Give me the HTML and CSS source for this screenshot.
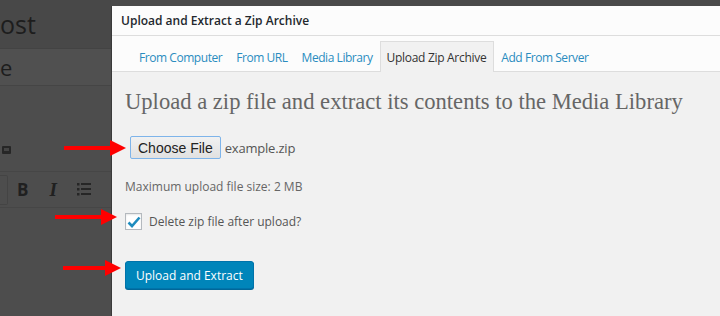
FILE: index.html
```html
<!DOCTYPE html>
<html lang="en">
<head>
  <meta charset="UTF-8" />
  <meta name="viewport" content="width=device-width, initial-scale=1.0"/>
  <title>Upload and Extract a Zip Archive</title>
  <link rel="stylesheet" href="styles.css">
</head>
<body>
  <!-- dimmed editor behind the modal -->
  <div class="behind">
    <div class="behind-title">ost</div>
    <div class="behind-input">e</div>
    <div class="behind-media">
      <svg width="10" height="10" viewBox="0 0 10 10"><rect x="0" y="1" width="9" height="8" rx="1" fill="#262626"/><rect x="2" y="3" width="5" height="3" fill="#444"/></svg>
    </div>
    <div class="behind-toolbar">
      <span class="tb-box"></span>
      <span class="tb-b">B</span>
      <span class="tb-i">I</span>
      <svg class="tb-list" width="14" height="13" viewBox="0 0 14 13">
        <g fill="#262626"><rect x="0" y="0" width="2.5" height="2.5"/><rect x="4" y="0" width="10" height="2"/><rect x="0" y="5" width="2.5" height="2.5"/><rect x="4" y="5" width="10" height="2"/><rect x="0" y="10" width="2.5" height="2.5"/><rect x="4" y="10" width="10" height="2"/></g>
      </svg>
    </div>
  </div>

  <div class="modal">
    <div class="modal-header">Upload and Extract a Zip Archive</div>
    <div class="tabs">
      <a class="tab">From Computer</a>
      <a class="tab">From URL</a>
      <a class="tab">Media Library</a>
      <a class="tab active">Upload Zip Archive</a>
      <a class="tab">Add From Server</a>
    </div>
    <div class="content">
      <h2>Upload a zip file and extract its contents to the Media Library</h2>
      <div class="file-row">
        <button class="choose">Choose File</button>
        <span class="file-name">example.zip</span>
      </div>
      <p class="max-size">Maximum upload file size: 2 MB</p>
      <label class="check-row">
        <span class="checkbox">
          <svg width="14" height="12" viewBox="0 0 14 12"><path d="M1.5 6.5 L5 10 L12.5 1.5" fill="none" stroke="#1e8cbe" stroke-width="2.6"/></svg>
        </span>
        Delete zip file after upload?
      </label>
      <button class="primary">Upload and Extract</button>
    </div>
  </div>

  <!-- annotation arrows -->
  <svg class="arrow arrow-1" width="62" height="18" viewBox="0 0 62 18"><path d="M0 7 H46 V1 L62 9 L46 17 V11 H0 Z" fill="#f00"/></svg>
  <svg class="arrow arrow-2" width="62" height="18" viewBox="0 0 62 18"><path d="M0 7 H46 V1 L62 9 L46 17 V11 H0 Z" fill="#f00"/></svg>
  <svg class="arrow arrow-3" width="58" height="18" viewBox="0 0 58 18"><path d="M0 7 H42 V1 L58 9 L42 17 V11 H0 Z" fill="#f00"/></svg>
</body>
</html>
```

FILE: styles.css
```css
body {
  margin: 0;
  height: 316px;
  overflow: hidden;
  display: flex;
  background: #4a4a4a;
  font-family: "Open Sans", "Noto Sans", sans-serif;
  position: relative;
}

/* ---- dimmed page behind ---- */
.behind {
  width: 111px;
  flex-shrink: 0;
  display: flex;
  flex-direction: column;
  background: #4d4d4d;
}
.behind-title {
  height: 48px;
  background: #484848;
  border-bottom: 1px solid #434343;
  display: flex;
  align-items: center;
  font-size: 25px;
  color: #1d1d1d;
}
.behind-input {
  height: 36px;
  border-bottom: 1px solid #454545;
  display: flex;
  align-items: center;
  font-size: 22px;
  color: #1d1d1d;
  background: #505050;
}
.behind-media {
  height: 12px;
  margin-top: 58px;
  padding-left: 2px;
  display: flex;
  align-items: center;
}
.behind-toolbar {
  margin-top: 15px;
  height: 35px;
  border-top: 1px solid #464646;
  border-bottom: 1px solid #464646;
  display: flex;
  align-items: center;
  color: #222;
}
.tb-box {
  width: 7px;
  height: 28px;
  border: 1px solid #444;
  border-left: none;
  border-radius: 0 2px 2px 0;
}
.tb-b {
  font-family: "Open Sans", sans-serif;
  font-weight: 700;
  font-size: 17px;
  margin-left: 9px;
  color: #202020;
}
.tb-i {
  font-family: "Liberation Serif", serif;
  font-style: italic;
  font-weight: 700;
  font-size: 19px;
  margin-left: 21px;
  color: #202020;
}
.tb-list {
  margin-left: 20px;
}

/* ---- modal ---- */
.modal {
  flex: 1;
  margin-top: 6px;
  background: #f1f1f1;
  border-left: 1px solid #3a3a3a;
  display: flex;
  flex-direction: column;
  min-width: 0;
}
.modal-header {
  height: 29px;
  background: #fcfcfc;
  border-bottom: 1px solid #dddddd;
  padding-left: 9px;
  font-size: 12px;
  font-weight: 600;
  color: #23282d;
  display: flex;
  align-items: center;
}
.tabs {
  height: 35px;
  background: #fcfcfc;
  border-bottom: 1px solid #dddddd;
  display: flex;
  align-items: flex-end;
  padding-left: 20px;
}
.tab {
  height: 29px;
  padding: 0 6px;
  display: flex;
  align-items: center;
  font-size: 12px;
  letter-spacing: -0.45px;
  color: #2a8cbf;
  border: 1px solid transparent;
  border-bottom: none;
  margin-bottom: -1px;
  white-space: nowrap;
}
.tab.active {
  background: #f1f1f1;
  border-color: #dddddd;
  color: #333;
  height: 30px;
  padding: 0 7px 0 6px;
  letter-spacing: -0.3px;
}

.content {
  padding: 17px 13px 0;
}
.content h2 {
  margin: 0;
  font-family: "Liberation Serif", Georgia, serif;
  font-weight: 400;
  font-size: 22.6px;
  color: #666;
  white-space: nowrap;
}
.file-row {
  margin-top: 21px;
  margin-left: 5px;
  display: flex;
  align-items: center;
  gap: 4px;
}
.choose {
  height: 23px;
  padding: 0 7px;
  font-family: "Liberation Sans", Arial, sans-serif;
  font-size: 14px;
  color: #222;
  background: linear-gradient(#f1f1f1, #e1e1e1);
  border: 1px solid #7eb4ea;
  border-radius: 2px;
}
.file-name {
  font-size: 13px;
  letter-spacing: -0.2px;
  color: #555;
}
.max-size {
  margin: 19px 0 0;
  font-size: 12px;
  color: #666;
}
.check-row {
  margin-top: 18px;
  display: flex;
  align-items: center;
  gap: 7px;
  font-size: 12px;
  color: #555;
}
.checkbox {
  width: 15px;
  height: 15px;
  background: #fff;
  border: 1px solid #b4b9be;
  box-shadow: inset 0 1px 2px rgba(0, 0, 0, 0.1);
  display: flex;
  align-items: center;
  justify-content: center;
}
.primary {
  display: block;
  margin-top: 31px;
  height: 28px;
  padding: 0 10px;
  font-family: "Open Sans", sans-serif;
  font-size: 12px;
  color: #fff;
  background: #0085ba;
  border: 1px solid #0073aa;
  border-radius: 3px;
  box-shadow: 0 1px 0 #006799;
}

/* ---- red annotation arrows ---- */
.arrow {
  position: absolute;
}
.arrow-1 {
  left: 64px;
  top: 139px;
}
.arrow-2 {
  left: 55px;
  top: 208px;
}
.arrow-3 {
  left: 63px;
  top: 259px;
}
```
